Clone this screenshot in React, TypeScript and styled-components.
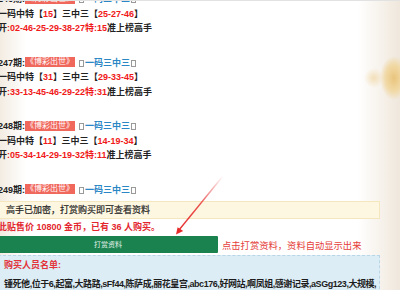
import styled, { createGlobalStyle } from "styled-components";

const GlobalStyle = createGlobalStyle`
    html, body {
        margin: 0;
        padding: 0;
        overflow: hidden;
    }
    body {
        width: 400px;
        height: 290px;
        font-family: "Liberation Sans", "Noto Sans CJK SC", sans-serif;
        background:
            radial-gradient(ellipse 14px 22px at 394px 78px, #e9c57d 0%, #f1d9a6 60%, rgba(255, 255, 255, 0) 100%),
            radial-gradient(ellipse 10px 10px at 374px 78px, #f3dfb8 0%, rgba(255, 255, 255, 0) 100%),
            linear-gradient(to left, #efe7dc 0px, #f6f1ea 18px, rgba(255, 255, 255, 0) 42px),
            linear-gradient(to right, #f3ece2 0px, rgba(255, 255, 255, 0) 26px),
            #ffffff;
    }
`;

const Page = styled.div`
    position: relative;
    width: 400px;
    height: 290px;
    overflow: hidden;
    border-top: 1px solid #e2e2e2;
    box-sizing: border-box;
`;

const Content = styled.div`
    width: 382px;
    margin: -9px 0 0 -2px;
    font-size: 9px;
    font-weight: bold;
    color: #222;
`;

const Group = styled.div<{ $gap: number }>`
    margin-bottom: ${(p) => p.$gap}px;
`;

const Line = styled.div`
    height: 14.5px;
    line-height: 14.5px;
    white-space: nowrap;
`;

const Red = styled.span`
    color: #f01818;
`;

const Tag = styled.span`
    display: inline-block;
    height: 10px;
    line-height: 10px;
    padding: 0 1px;
    font-size: 8px;
    font-weight: normal;
    color: #fff;
    background: #f0675c;
    vertical-align: middle;
    margin-top: -2px;
`;

const Tip = styled.span`
    color: #2a86c4;
    margin-left: 3px;
`;

const Tofu = styled.span`
    display: inline-block;
    width: 3px;
    height: 5px;
    border: 1px solid #9a9a9a;
    margin: 0 1px;
    vertical-align: -1px;
`;

const Locked = styled.div`
    height: 16px;
    line-height: 16px;
    padding-left: 7px;
    background: #fdf6e0;
    border: 1px solid #f4e6bd;
    color: #1f1f1f;
    font-weight: normal;
    -webkit-text-stroke: 0.2px #1f1f1f;
`;

const Price = styled.div`
    height: 12px;
    line-height: 12px;
    margin: 2px 0 3px;
    color: #e3262e;
`;

const ActionRow = styled.div`
    display: flex;
    align-items: center;
    gap: 4px;
`;

const PayButton = styled.div`
    width: 220px;
    height: 17px;
    line-height: 17px;
    text-align: center;
    background: #19824f;
    color: #e8f4ec;
    font-size: 7px;
    font-weight: normal;
    border-radius: 1px;
`;

const Hint = styled.span`
    color: #e5403b;
    font-weight: normal;
    font-size: 9.3px;
`;

const Buyers = styled.div`
    margin-top: 2px;
    padding: 3px 0 0 5px;
    height: 60px;
    background: #dcedf6;
    border: 1px dashed #b8d6e8;
`;

const BuyersTitle = styled.div`
    color: #e2343a;
    line-height: 12px;
    margin-bottom: 7px;
`;

const Names = styled.div`
    color: #1c1c1c;
    line-height: 13px;
    white-space: nowrap;
    letter-spacing: -0.45px;
`;

const Arrow = styled.svg`
    position: absolute;
    left: 170px;
    top: 170px;
`;

type Draw = {
    period: number;
    pick?: string;
    three?: string;
    open?: string;
    special?: string;
};

const draws: Draw[] = [
    { period: 246, pick: "15", three: "25-27-46", open: "02-46-25-29-38-27", special: "15" },
    { period: 247, pick: "31", three: "29-33-45", open: "33-13-45-46-29-22", special: "31" },
    { period: 248, pick: "11", three: "14-19-34", open: "05-34-14-29-19-32", special: "11" },
    { period: 249 },
];

function App() {
    return (
        <Page>
            <GlobalStyle />
            <Content>
                {draws.map((d) => (
                    <Group key={d.period} $gap={d.pick ? 20 : 4}>
                        <Line>
                            {d.period}期:<Tag>《博彩出世》</Tag>
                            <Tip><Tofu />一码三中三<Tofu /></Tip>
                        </Line>
                        {d.pick && (
                            <>
                                <Line>
                                    一码中特【<Red>{d.pick}</Red>】三中三【<Red>{d.three}</Red>】
                                </Line>
                                <Line>
                                    开<Red>:{d.open}特:{d.special}</Red>准上榜高手
                                </Line>
                            </>
                        )}
                    </Group>
                ))}
                <Locked>高手已加密，打赏购买即可查看资料</Locked>
                <Price>此贴售价 10800 金币，已有 36 人购买。</Price>
                <ActionRow>
                    <PayButton>打赏资料</PayButton>
                    <Hint>点击打赏资料，资料自动显示出来</Hint>
                </ActionRow>
                <Buyers>
                    <BuyersTitle>购买人员名单:</BuyersTitle>
                    <Names>锺死他,位于6,起富,大路路,sFf44,陈萨成,丽花皇宫,abc176,好网站,啊凤姐,感谢记录,aSGg123,大规模,</Names>
                    <Names>天上王古,龙在天,张小凡,赛车手,金手指,幸运星,好运来,明天会更好,财神到,小小鸟,发发发,</Names>
                </Buyers>
            </Content>
            <Arrow width="60" height="70" viewBox="0 0 60 70">
                <defs>
                    <linearGradient id="arrowFade" x1="53" y1="5" x2="8" y2="61" gradientUnits="userSpaceOnUse">
                        <stop offset="0" stopColor="#e62a2a" stopOpacity="0" />
                        <stop offset="0.5" stopColor="#e62a2a" stopOpacity="0.8" />
                        <stop offset="1" stopColor="#e62a2a" />
                    </linearGradient>
                </defs>
                <line x1="53" y1="5" x2="9" y2="59" stroke="url(#arrowFade)" strokeWidth="1.4" />
                <polygon points="6,63.5 13.2,60 7.6,56.2" fill="#e62a2a" />
            </Arrow>
        </Page>
    );
}

export default App;
